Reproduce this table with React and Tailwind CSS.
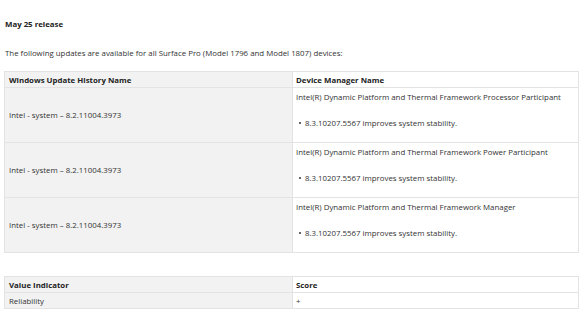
// Surface Pro driver release notes: title, intro line and two bordered tables.

const updates = [
  "Intel(R) Dynamic Platform and Thermal Framework Processor Participant",
  "Intel(R) Dynamic Platform and Thermal Framework Power Participant",
  "Intel(R) Dynamic Platform and Thermal Framework Manager",
];

function UpdateRow({ device }) {
  return (
    <tr className="h-[55px]">
      <td className="border border-[#e3e3e3] bg-[#f2f2f2] px-[4px] align-middle">
        Intel - system – 8.2.11004.3973
      </td>
      <td className="border border-[#e3e3e3] bg-white px-[3px] pt-[4px] pb-[12px] align-top">
        <div>{device}</div>
        <ul className="mt-[16px] pl-[3px]">
          <li className="flex items-center gap-[4px]">
            <span className="h-[2px] w-[2px] rounded-full bg-[#333]" />
            8.3.10207.5567 improves system stability.
          </li>
        </ul>
      </td>
    </tr>
  );
}

export default function App() {
  return (
    <div className="h-[320px] w-[582px] overflow-hidden bg-white pl-[4px] pr-[3px] font-['Open_Sans','Noto_Sans',sans-serif] text-[7.85px] leading-[10px] text-[#333]">
      <h2 className="pt-[19px] pl-[1px] text-[7.85px] font-bold text-[#222]">May 25 release</h2>
      <p className="mt-[19px] pl-[1px]">
        The following updates are available for all Surface Pro (Model 1796 and Model 1807) devices:
      </p>

      <table className="mt-[13px] w-[575px] border-collapse text-left">
        <colgroup>
          <col className="w-[288px]" />
          <col />
        </colgroup>
        <thead>
          <tr className="h-[16px] font-bold text-[#222]">
            <th className="border border-[#e3e3e3] bg-[#f2f2f2] px-[4px]">Windows Update History Name</th>
            <th className="border border-[#e3e3e3] bg-white px-[3px]">Device Manager Name</th>
          </tr>
        </thead>
        <tbody>
          {updates.map((d) => (
            <UpdateRow key={d} device={d} />
          ))}
        </tbody>
      </table>

      <table className="mt-[23px] w-[575px] border-collapse text-left">
        <colgroup>
          <col className="w-[288px]" />
          <col />
        </colgroup>
        <thead>
          <tr className="h-[16px] font-bold text-[#222]">
            <th className="border border-[#e3e3e3] bg-[#f2f2f2] px-[4px]">Value Indicator</th>
            <th className="border border-[#e3e3e3] bg-white px-[3px]">Score</th>
          </tr>
        </thead>
        <tbody>
          <tr className="h-[16px]">
            <td className="border border-[#e3e3e3] bg-[#f2f2f2] px-[4px]">Reliability</td>
            <td className="border border-[#e3e3e3] bg-white px-[3px]">+</td>
          </tr>
        </tbody>
      </table>
    </div>
  );
}
